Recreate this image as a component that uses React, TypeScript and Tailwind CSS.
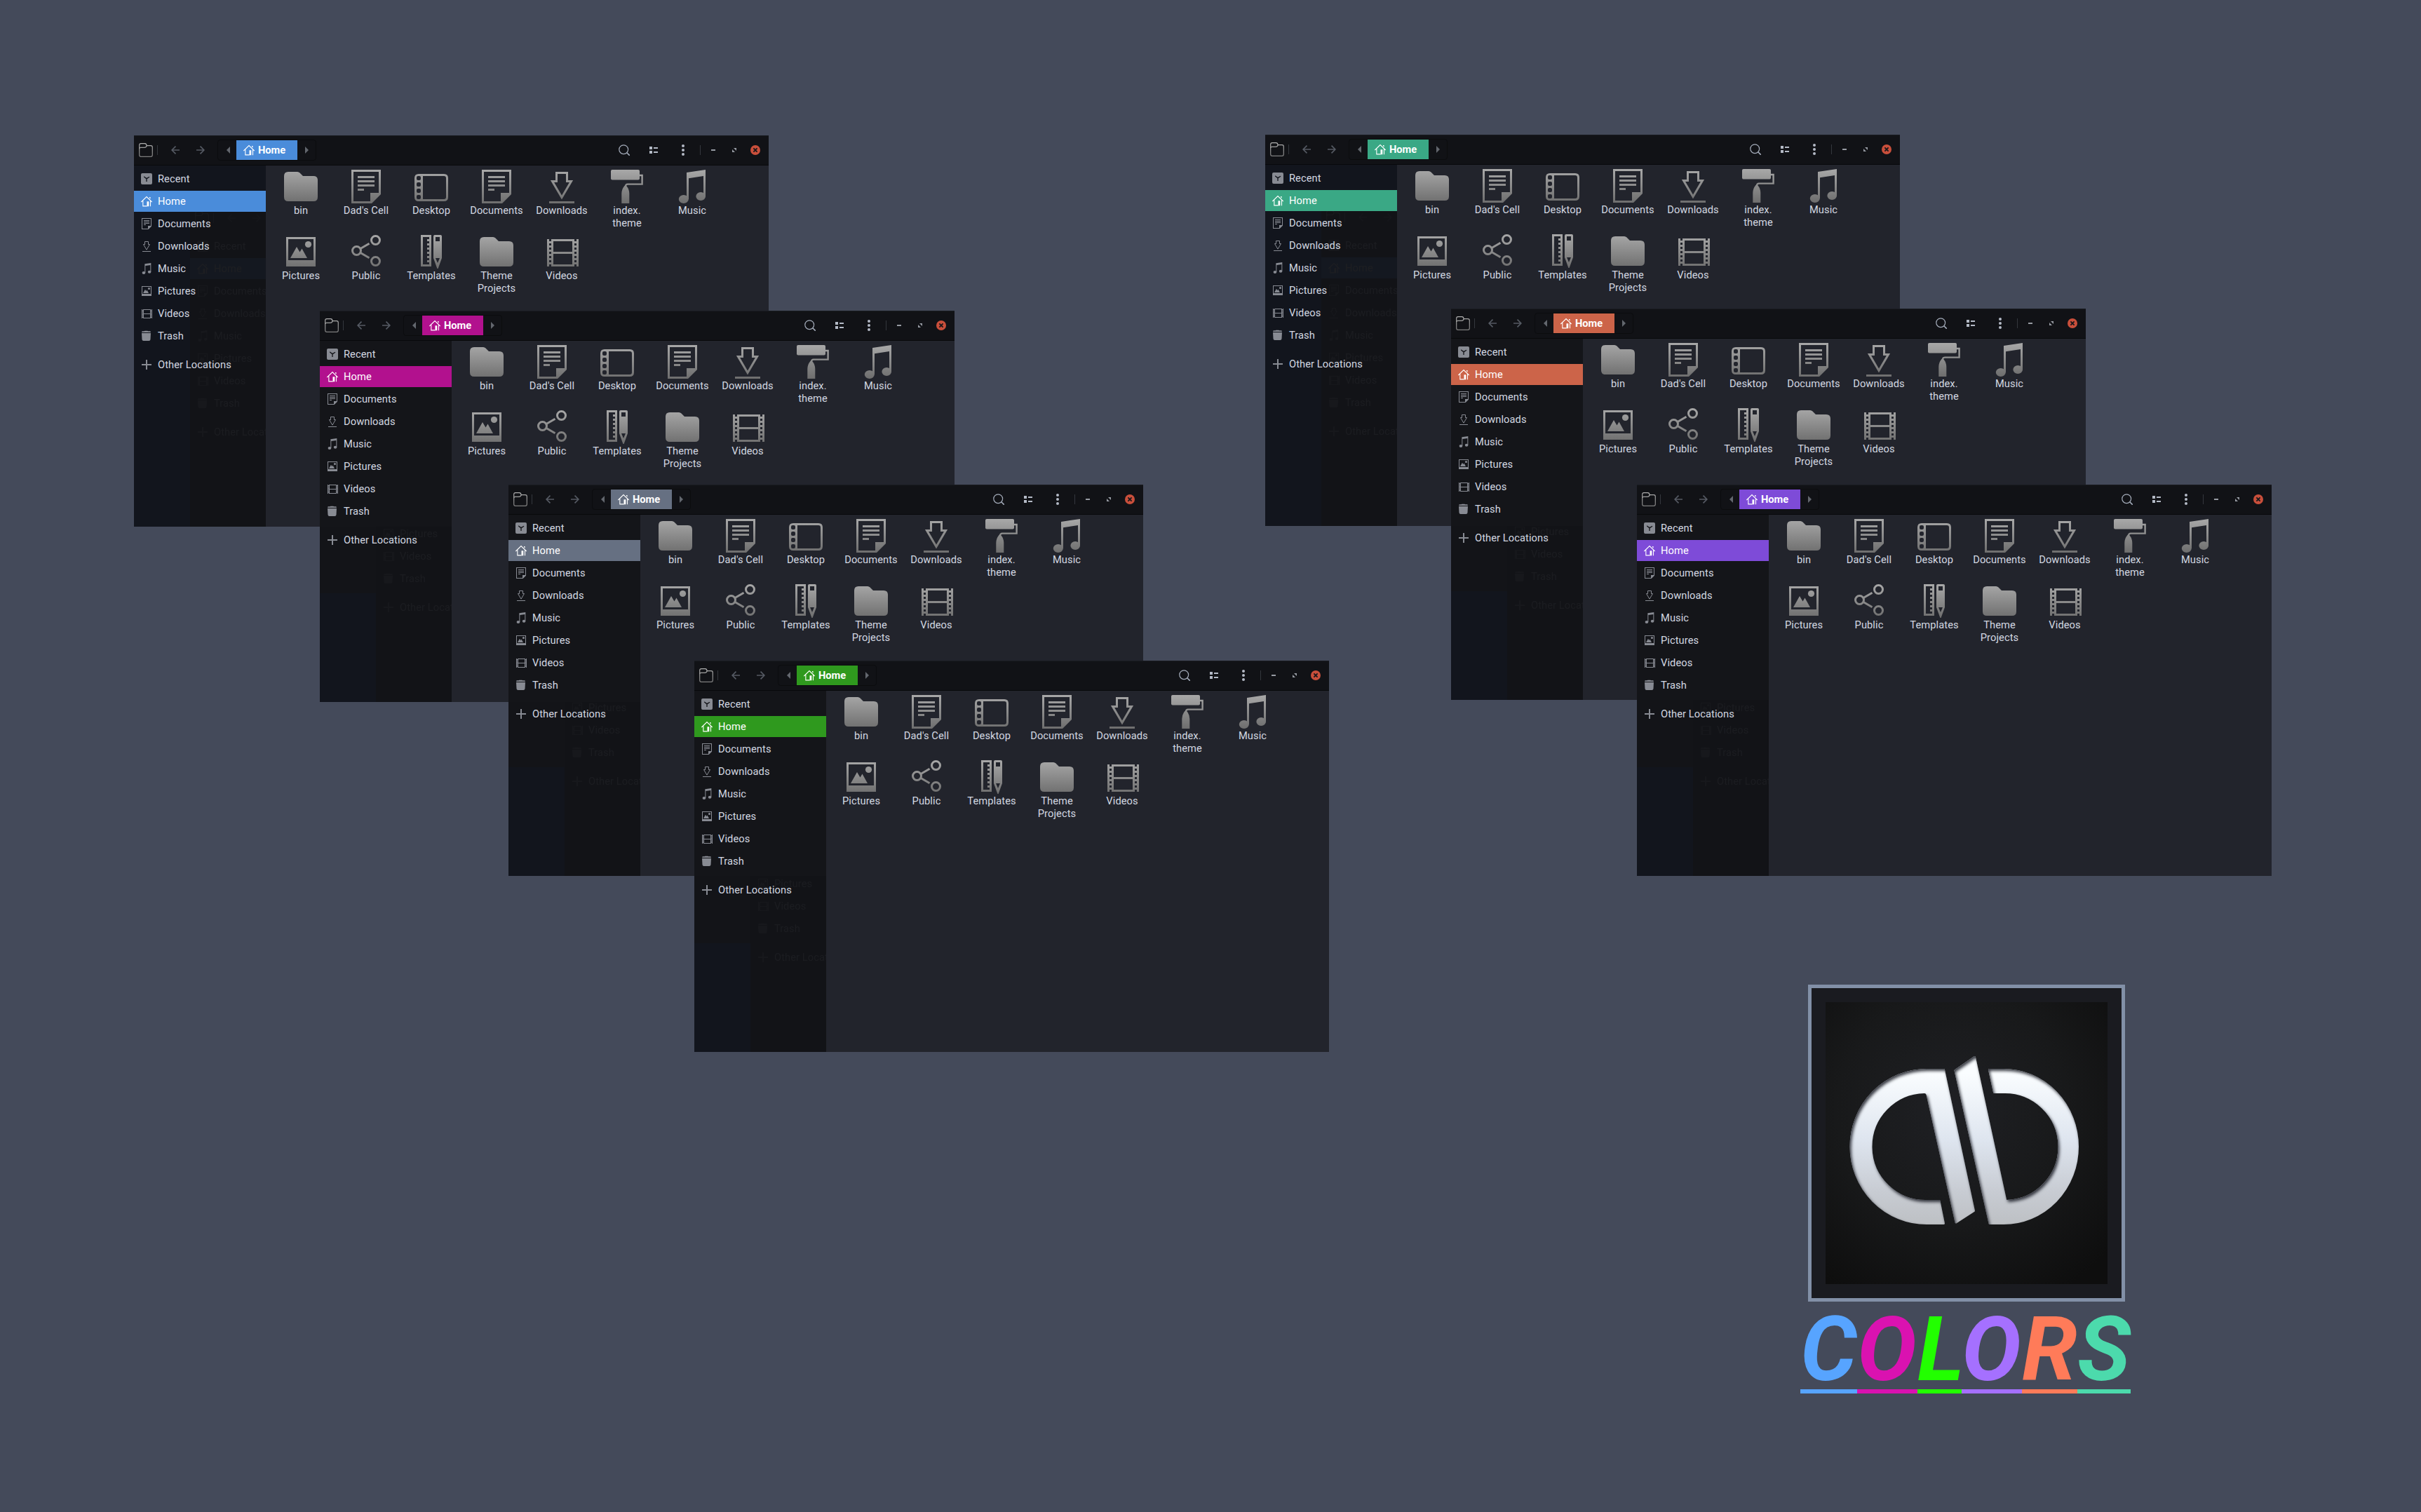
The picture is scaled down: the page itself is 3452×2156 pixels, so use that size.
import React from "react";

type IconProps = { fill: string; className?: string };

const glyphs: Record<string, (c: string) => React.ReactNode> = {
  folder: (c) => (
    <path fill={c} d="M6 3H19Q21 3 22.5 4.5L27 9H42Q48 9 48 15V39Q48 45 42 45H6Q0 45 0 39V9Q0 3 6 3Z" />
  ),
  document: (c) => (
    <>
      <path fill={c} fillRule="evenodd" d="M3 0H45V35L32 48H3ZM6 3V45H30V33H42V3Z" />
      <path fill={c} d="M12 9H36V12H12ZM12 15H36V18H12ZM12 21H36V24H12ZM12 27H21V30H12Z" />
    </>
  ),
  desktop: (c) => (
    <path
      fill={c}
      fillRule="evenodd"
      d="M6 6H42Q48 6 48 12V39Q48 45 42 45H6Q0 45 0 39V12Q0 6 6 6ZM12 9V42H42Q45 42 45 39V12Q45 9 42 9ZM5 9Q3 9 3 11V13Q3 15 5 15H7Q9 15 9 13V11Q9 9 7 9ZM5 18Q3 18 3 20V22Q3 24 5 24H7Q9 24 9 22V20Q9 18 7 18ZM5 27Q3 27 3 29V31Q3 33 5 33H7Q9 33 9 31V29Q9 27 7 27ZM5 36Q3 36 3 38V40Q3 42 5 42H7Q9 42 9 40V38Q9 36 7 36Z"
    />
  ),
  download: (c) => (
    <>
      <path fill="none" stroke={c} strokeWidth="3" d="M16.5 16.5V4.5H31.5V16.5H37.5L24 39.5L10.5 16.5Z" />
      <path fill={c} d="M6 45H42V48H6Z" />
    </>
  ),
  roller: (c) => (
    <>
      <rect fill={c} x="1" y="0" width="41" height="14.5" rx="2" />
      <path fill="none" stroke={c} strokeWidth="2.4" d="M42 8H45.6V20.6H25Q22 20.6 21.5 25" />
      <path fill={c} d="M16.3 48V34Q16.3 28 20.4 23H23.2Q27.3 28 27.3 34V48Z" />
    </>
  ),
  music: (c) => (
    <>
      <path fill={c} d="M16 4L43 0V38H40V9L19 12.3V42H16Z" />
      <ellipse fill={c} cx="11.8" cy="42" rx="7" ry="6" />
      <ellipse fill={c} cx="36.2" cy="38" rx="6.8" ry="6" />
    </>
  ),
  picture: (c) => (
    <>
      <path fill={c} fillRule="evenodd" d="M3 3H45V45H3ZM6 6V36H42V6Z" />
      <circle fill={c} cx="34.5" cy="13.5" r="4.6" />
      <path fill={c} d="M9 33L18 17L22.5 24.5L25.5 19.5L33 33Z" />
    </>
  ),
  share: (c) => (
    <g fill="none" stroke={c} strokeWidth="3">
      <circle cx="10.5" cy="22.5" r="6" />
      <circle cx="37.5" cy="7.5" r="6" />
      <circle cx="37.5" cy="37.5" r="6" />
      <path d="M16 19.5L28.5 12.3M16 25.5L28.5 32.7" />
    </g>
  ),
  templates: (c) => (
    <>
      <path
        fill={c}
        fillRule="evenodd"
        d="M9 0H24V45H9ZM12 3V42H21V39H18V36H21V33H18V30H21V27H18V24H21V21H18V18H21V15H18V12H21V9H18V6H21V3Z"
      />
      <path
        fill={c}
        fillRule="evenodd"
        d="M29 0H37Q39 0 39 2V33L33.6 48H32.4L27 33V2Q27 0 29 0ZM30 3V9H36V3ZM30 33L33 40L36 33Z"
      />
    </>
  ),
  video: (c) => (
    <path
      fill={c}
      fillRule="evenodd"
      d="M3 6H48V45H3ZM12 9V24H39V9ZM12 27V42H39V27ZM6 6V9H9V6ZM6 12V15H9V12ZM6 18V21H9V18ZM6 24V27H9V24ZM6 30V33H9V30ZM6 36V39H9V36ZM6 42V45H9V42ZM42 6V9H45V6ZM42 12V15H45V12ZM42 18V21H45V18ZM42 24V27H45V24ZM42 30V33H45V30ZM42 36V39H45V36ZM42 42V45H45V42Z"
    />
  ),
  recent: (c) => (
    <path
      fill={c}
      fillRule="evenodd"
      d="M6 0H42Q48 0 48 6V42Q48 48 42 48H6Q0 48 0 42V6Q0 0 6 0ZM13 13L12 16.5L22 25V36H26V25L37 17.5L35.5 14L24 20.5Z"
    />
  ),
  trash: (c) => (
    <path fill={c} d="M14 4L16 2H28L30 4H40L42 9H3L5 4ZM3 12H42L40.5 39Q40 45 34 45H11Q5 45 4.5 39Z" />
  ),
  plus: (c) => <path fill={c} d="M21 3H27V21H45V27H27V45H21V27H3V21H21Z" />,
  home: (c) => (
    <>
      <path fill="none" stroke={c} strokeWidth="3.3" d="M1 27L24 4.5L47 27M8.5 22V44.500H26M40.500 22V46" />
      <path fill={c} d="M25.500 25H34V46H25.500ZM36 6H40.500V14L36 10Z" />
    </>
  ),
};

function Glyph({ name, fill, className }: IconProps & { name: string }) {
  return (
    <svg viewBox="0 0 48 48" className={className} aria-hidden="true">
      {glyphs[name](fill)}
    </svg>
  );
}

const places = [
  { icon: "recent", label: "Recent" },
  { icon: "home", label: "Home" },
  { icon: "document", label: "Documents" },
  { icon: "download", label: "Downloads" },
  { icon: "music", label: "Music" },
  { icon: "picture", label: "Pictures" },
  { icon: "video", label: "Videos" },
  { icon: "trash", label: "Trash" },
];

const files = [
  { icon: "folder", label: "bin" },
  { icon: "document", label: "Dad's Cell" },
  { icon: "desktop", label: "Desktop" },
  { icon: "document", label: "Documents" },
  { icon: "download", label: "Downloads" },
  { icon: "roller", label: "index.\ntheme" },
  { icon: "music", label: "Music" },
  { icon: "picture", label: "Pictures" },
  { icon: "share", label: "Public" },
  { icon: "templates", label: "Templates" },
  { icon: "folder", label: "Theme\nProjects" },
  { icon: "video", label: "Videos" },
];

// seeThrough: distance from the window's top at which its sidebar turns translucent.
const windows = [
  { place: "left-[191px] top-[193px]", accent: "bg-[#4a8cda]", seeThrough: 43 },
  { place: "left-[456px] top-[443px]", accent: "bg-[#b2118e]", seeThrough: 308 },
  { place: "left-[725px] top-[691px]", accent: "bg-[#667082]", seeThrough: 310 },
  { place: "left-[990px] top-[942px]", accent: "bg-[#2f991e]", seeThrough: 307 },
  { place: "left-[1804px] top-[192px]", accent: "bg-[#3aa885]", seeThrough: 43 },
  { place: "left-[2069px] top-[440px]", accent: "bg-[#cc6449]", seeThrough: 310 },
  { place: "left-[2334px] top-[691px]", accent: "bg-[#7e4bd8]", seeThrough: 307 },
];

function FolderOutline() {
  return (
    <svg viewBox="0 0 20 20" className="size-5" fill="none" stroke="url(#metal-small)" strokeWidth="1.2" aria-hidden="true">
      <path d="M0.7 3V17Q0.7 19.3 3 19.3H17Q19.3 19.3 19.3 17V6Q19.3 3.7 17 3.7H11.2Q10.6 0.7 8.6 0.7H3Q0.7 0.7 0.7 3Z" />
      <path d="M0.7 8Q0.7 6.3 2.4 6.3H8Q10.4 6.3 11.2 3.7" />
    </svg>
  );
}

function Arrow({ className }: { className: string }) {
  return (
    <svg viewBox="0 0 12 12" className={className} fill="none" stroke="#555a63" strokeWidth="1.7" aria-hidden="true">
      <path d="M6.5 0.6L1.1 6L6.5 11.4M1.1 6H12" />
    </svg>
  );
}

function Header({ accent }: { accent: string }) {
  return (
    <header className="flex h-[43px] shrink-0 items-center border-t border-b border-t-[#1a1c21] border-b-[#08090b] bg-[#111216] pb-px pl-[7px]">
      <FolderOutline />
      <div className="ml-1.5 h-3.5 w-px bg-[#34373d]" />
      <Arrow className="ml-[19px] size-3" />
      <Arrow className="ml-6 size-3 rotate-180" />
      <div className="ml-[18px] flex h-[30px] w-[141px] items-center rounded border border-[#0b0c0e]">
        <div className="flex w-[26px] justify-center">
          <svg viewBox="0 0 5 10" className="ml-0.5 h-2.5 w-[5px]" fill="#63676e" aria-hidden="true">
            <path d="M5 0V10L0 5Z" />
          </svg>
        </div>
        <div className={"flex h-7 w-[87px] items-center pl-2.5 " + accent}>
          <Glyph name="home" fill="#ffffff" className="size-4" />
          <span className="ml-[5px] font-bold text-white">Home</span>
        </div>
        <svg viewBox="0 0 5 10" className="ml-[11px] h-2.5 w-[5px]" fill="#63676e" aria-hidden="true">
          <path d="M0 0V10L5 5Z" />
        </svg>
      </div>
      <div className="ml-auto flex items-center pr-3">
        <svg viewBox="0 0 16 16" className="size-4" fill="none" stroke="#a4acba" strokeWidth="1.2" aria-hidden="true">
          <circle cx="7.2" cy="7.2" r="6.4" />
          <path d="M11.8 11.8L15.8 15.8" strokeWidth="1.6" />
        </svg>
        <svg viewBox="0 0 12 10" className="ml-7 h-2.5 w-3" fill="#b4bac6" aria-hidden="true">
          <path d="M0 0H4V4H0ZM0 6H4V10H0ZM6 1H12V3H6ZM6 7H12V9H6Z" />
        </svg>
        <svg viewBox="0 0 4 16" className="ml-[34px] h-4 w-1" fill="#b4bac6" aria-hidden="true">
          <circle cx="2" cy="2" r="2" />
          <circle cx="2" cy="8" r="2" />
          <circle cx="2" cy="14" r="2" />
        </svg>
        <div className="ml-[22px] h-3.5 w-px bg-[#34373d]" />
        <div className="ml-[15px] h-0.5 w-1.5 bg-[#979ba3]" />
        <svg viewBox="0 0 6 6" className="ml-6 size-1.5" fill="#979ba3" aria-hidden="true">
          <path d="M2 0H6V4ZM0 2V6H4Z" />
        </svg>
        <svg viewBox="0 0 14 14" className="ml-5 size-3.5" aria-hidden="true">
          <circle cx="7" cy="7" r="7" fill="#c94f3b" />
          <path d="M4.4 4.4L9.6 9.6M9.6 4.4L4.4 9.6" stroke="#16171b" strokeWidth="1.8" />
        </svg>
      </div>
    </header>
  );
}

function PlaceRow({ icon, label, className = "" }: { icon: string; label: string; className?: string }) {
  const active = label === "Home";
  return (
    <li className={"flex h-[30px] items-center gap-2 pl-2.5 whitespace-nowrap " + className}>
      <Glyph name={icon} fill={active ? "#ffffff" : "#888b93"} className="size-4 shrink-0" />
      <span className={active ? "text-white" : "text-[#d3d8e1]"}>{label}</span>
    </li>
  );
}

function Places({ accent }: { accent: string }) {
  return (
    <ul className="relative flex flex-col gap-0.5 pt-1">
      {places.map((p) => (
        <PlaceRow key={p.label} {...p} className={p.label === "Home" ? accent : ""} />
      ))}
      <PlaceRow icon="plus" label="Other Locations" className="mt-[9px]" />
    </ul>
  );
}

// Faint image of the window behind, showing through the translucent sidebar.
function Behind({ seeThrough }: { seeThrough: number }) {
  return (
    <div
      className="absolute inset-x-0 bottom-0 overflow-hidden bg-[#131418]"
      style={{ top: seeThrough - 43 }}
      aria-hidden="true"
    >
      <div
        className="absolute bottom-0 left-0 w-20 bg-[#12151d]"
        style={{ top: seeThrough === 43 ? 0 : 403 - seeThrough }}
      />
      {seeThrough === 43 && <div className="absolute top-0 right-0 h-[60px] w-[108px] bg-[#12151d]" />}
      <div className="absolute left-20 w-[188px] bg-[#121317]" style={{ top: 96 - seeThrough, height: 558 }}>
        <div className="opacity-[0.045]">
          <div className="flex h-[43px] items-center pl-[7px]">
            <FolderOutline />
            <div className="ml-1.5 h-3.5 w-px bg-[#8d9199]" />
            <Arrow className="ml-[19px] size-3" />
            <Arrow className="ml-6 size-3 rotate-180" />
          </div>
          <Places accent="bg-[#4a8cda]" />
        </div>
      </div>
    </div>
  );
}

function FileWindow({ place, accent, seeThrough }: (typeof windows)[number]) {
  return (
    <section className={"absolute flex h-[558px] w-[905px] flex-col overflow-hidden bg-[#22242c] " + place}>
      <Header accent={accent} />
      <div className="flex flex-1 tracking-[0.08px]">
        <nav className="relative w-[188px] shrink-0 overflow-hidden bg-[#141519]">
          <Behind seeThrough={seeThrough} />
          <Places accent={accent} />
        </nav>
        <main className="grid flex-1 auto-rows-[93px] grid-cols-[repeat(7,93px)] content-start pt-1.5 pl-[3.5px]">
          {files.map((f, i) => (
            <figure key={i} className="flex flex-col items-center">
              <Glyph name={f.icon} fill="url(#metal)" className="size-12" />
              <figcaption className="mt-px text-center whitespace-pre text-[#d3d8e1]">{f.label}</figcaption>
            </figure>
          ))}
        </main>
      </div>
    </section>
  );
}

function Emblem() {
  return (
    <div className="ml-[11px] size-[452px] border-[5px] border-[#8290a7] bg-[#1a1b20] p-5">
      <svg viewBox="0 0 402 402" className="size-[402px]" aria-hidden="true">
        <defs>
          <radialGradient id="stage" cx="0.45" cy="0.38" r="0.75">
            <stop offset="0" stopColor="#1f2024" />
            <stop offset="0.55" stopColor="#18191a" />
            <stop offset="1" stopColor="#0e0e0e" />
          </radialGradient>
          <linearGradient id="chrome" gradientUnits="userSpaceOnUse" x1="0" y1="77" x2="0" y2="317">
            <stop offset="0.1" stopColor="#fafdff" />
            <stop offset="0.5" stopColor="#dee5ef" />
            <stop offset="0.8" stopColor="#c8ccd3" />
            <stop offset="1" stopColor="#bdc0c4" />
          </linearGradient>
          <filter id="bevel" x="-5%" y="-5%" width="110%" height="110%" colorInterpolationFilters="sRGB">
            <feOffset in="SourceAlpha" dx="1.5" dy="3" result="shifted" />
            <feGaussianBlur in="shifted" stdDeviation="2.2" result="soft" />
            <feComposite in="SourceAlpha" in2="soft" operator="out" result="edge" />
            <feFlood floodColor="#22252d" floodOpacity="0.9" />
            <feComposite in2="edge" operator="in" result="shade" />
            <feMerge>
              <feMergeNode in="SourceGraphic" />
              <feMergeNode in="shade" />
            </feMerge>
          </filter>
        </defs>
        <rect width="402" height="402" fill="url(#stage)" />
        <g fill="url(#chrome)" stroke="url(#chrome)" strokeWidth="3" strokeLinejoin="round" filter="url(#bevel)">
          <path d="M168.5 96.5L211.5 297.5L186 314L145 131.500Q144 128.500 141 128.500A77.500 77.500 0 0 0 144 283.500H162L168.500 315.500H144A108 109.500 0 0 1 144 96.500Z" />
          <path d="M185 97.5L212.5 78.5L257 283.5A77.5 77.5 0 0 0 254 128.5H240.5L233.5 96.5H254A105.5 109.5 0 0 1 254 315.5H234Z" />
        </g>
      </svg>
    </div>
  );
}

const letters = [
  { ch: "C", style: "w-[81px] text-[#57a4ff] border-[#57a4ff]" },
  { ch: "O", style: "w-[86px] text-[#da12b0] border-[#da12b0]" },
  { ch: "L", style: "w-[63px] text-[#22ff00] border-[#22ff00]" },
  { ch: "O", style: "w-[86px] text-[#a570ff] border-[#a570ff]" },
  { ch: "R", style: "w-[79px] text-[#ff7b59] border-[#ff7b59]" },
  { ch: "S", style: "w-[76px] text-[#4cdaac] border-[#4cdaac]" },
];

export default function App() {
  return (
    <div className="relative h-[2156px] w-[3452px] overflow-hidden bg-[#444a5a] font-['Roboto',sans-serif] text-[14.667px] leading-[18px]">
      <svg className="absolute size-0" aria-hidden="true">
        <defs>
          <linearGradient id="metal" gradientUnits="userSpaceOnUse" x1="0" y1="0" x2="0" y2="48">
            <stop offset="0" stopColor="#a8a8a8" />
            <stop offset="1" stopColor="#6e6e6e" />
          </linearGradient>
          <linearGradient id="metal-small" gradientUnits="userSpaceOnUse" x1="0" y1="0" x2="0" y2="20">
            <stop offset="0" stopColor="#b0b0b0" />
            <stop offset="1" stopColor="#7c7c7c" />
          </linearGradient>
        </defs>
      </svg>
      {windows.map((w) => (
        <FileWindow key={w.place} {...w} />
      ))}
      <aside className="absolute top-[1404px] left-[2567px] w-[471px]">
        <Emblem />
        <h1 className="flex text-[127px] leading-[137px] font-bold italic">
          {letters.map((l, i) => (
            <span key={i} className={"block h-[131px] border-b-[6px] " + l.style}>
              {l.ch}
            </span>
          ))}
        </h1>
      </aside>
    </div>
  );
}
